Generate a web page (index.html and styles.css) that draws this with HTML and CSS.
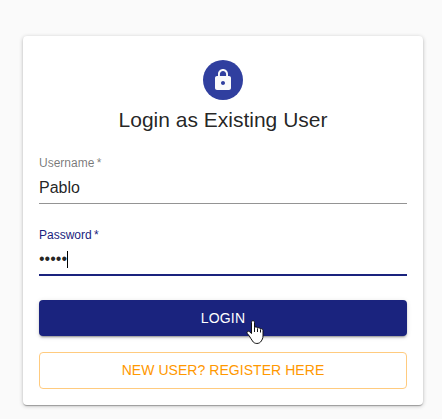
FILE: index.html
```html
<!DOCTYPE html>
<html lang="en">
<head>
<meta charset="utf-8">
<title>Login</title>
<link rel="stylesheet" href="styles.css">
</head>
<body>
<main class="card">
  <div class="avatar">
    <svg width="24" height="24" viewBox="0 0 24 24" fill="currentColor" aria-hidden="true"><path d="M18 8h-1V6c0-2.760-2.240-5-5-5S7 3.240 7 6v2H6c-1.100 0-2 .9-2 2v10c0 1.100.9 2 2 2h12c1.100 0 2-.9 2-2V10c0-1.100-.9-2-2-2zm-6 9c-1.100 0-2-.9-2-2s.9-2 2-2 2 .9 2 2-.9 2-2 2zm3.100-9H8.900V6c0-1.710 1.390-3.100 3.100-3.100s3.100 1.390 3.100 3.100v2z"/></svg>
  </div>
  <h1 class="title">Login as Existing User</h1>
  <div class="field">
    <div class="label">Username&thinsp;*</div>
    <div class="value">Pablo</div>
  </div>
  <div class="field focused">
    <div class="label">Password&thinsp;*</div>
    <div class="value"><span class="dots">•••••</span><span class="caret"></span></div>
  </div>
  <div class="button primary">LOGIN
    <svg class="cursor" width="19" height="25" viewBox="0 0 19 25" aria-hidden="true"><path d="M5.500 13.500V2.500c0-2.500 3-2.500 3 0v5c.8-1 2.800-.7 3.100.6.800-.8 2.500-.4 2.800.8 1-.5 2.600.1 2.600 1.600V16c0 2.500-1 3.800-1.700 5-1.800 3.300-7 3.300-8.800 0-.9-1.700-2.200-3-3.200-5L1.300 13.500c-1-1.800.8-3 2.200-1.800z" fill="#fff" stroke="#111" stroke-width="1"/><path d="M8.500 7.500V12M11.500 8.500V12M14.500 9.500V12.500" fill="none" stroke="#111"/></svg>
  </div>
  <div class="button outlined">NEW USER? REGISTER HERE</div>
</main>
</body>
</html>
```
FILE: styles.css
```css
* { box-sizing: border-box; }
body {
  margin: 0;
  padding: 36px 19px 14px 23px;
  background: #fafafa;
  color: rgba(0, 0, 0, .87);
  font-family: "Liberation Sans", Arial, sans-serif;
}
.card {
  display: flex;
  flex-direction: column;
  width: 400px;
  height: 369px;
  padding: 24px 16px 16px;
  border-radius: 4px;
  background: #fff;
  box-shadow: 0 1px 4px rgba(0,0,0,.24), 0 1px 1px rgba(0,0,0,.16), 0 2px 1px -1px rgba(0,0,0,.14);
}
.avatar {
  display: flex;
  align-items: center;
  justify-content: center;
  align-self: center;
  width: 40px;
  height: 40px;
  border-radius: 50%;
  background: #303f9f;
  color: #fafafa;
}
.title {
  height: 56px;
  margin: 0;
  padding-top: 6px;
  font-size: 21px;
  font-weight: 400;
  line-height: 28px;
  text-align: center;
}
.field {
  height: 48px;
  margin-bottom: 24px;
  border-bottom: 1px solid #949494;
}
.label {
  height: 22px;
  font-size: 12px;
  line-height: 14px;
  color: rgba(0, 0, 0, .54);
}
.value {
  display: flex;
  align-items: center;
  height: 20px;
  font-size: 16px;
  line-height: 20px;
}
.focused { border-bottom: 2px solid #1a237e; }
.focused .label { color: #1a237e; }
.dots { position: relative; top: -1px; }
.caret { width: 1px; height: 17px; margin-top: -1px; background: #000; }
.button {
  position: relative;
  display: flex;
  align-items: center;
  justify-content: center;
  height: 36px;
  border-radius: 4px;
  font-size: 14px;
  letter-spacing: .05px;
}
.primary {
  background: #1a237e;
  color: #fff;
  letter-spacing: .2px;
  box-shadow: 0 3px 1px -2px rgba(0,0,0,.2), 0 2px 2px rgba(0,0,0,.14), 0 1px 5px rgba(0,0,0,.12);
}
.outlined {
  height: 37px;
  margin-top: 16px;
  padding-bottom: 2px;
  border: 1px solid #ffcb7f;
  color: #ff9800;
}
.cursor { position: absolute; left: 207px; top: 20px; }
```
